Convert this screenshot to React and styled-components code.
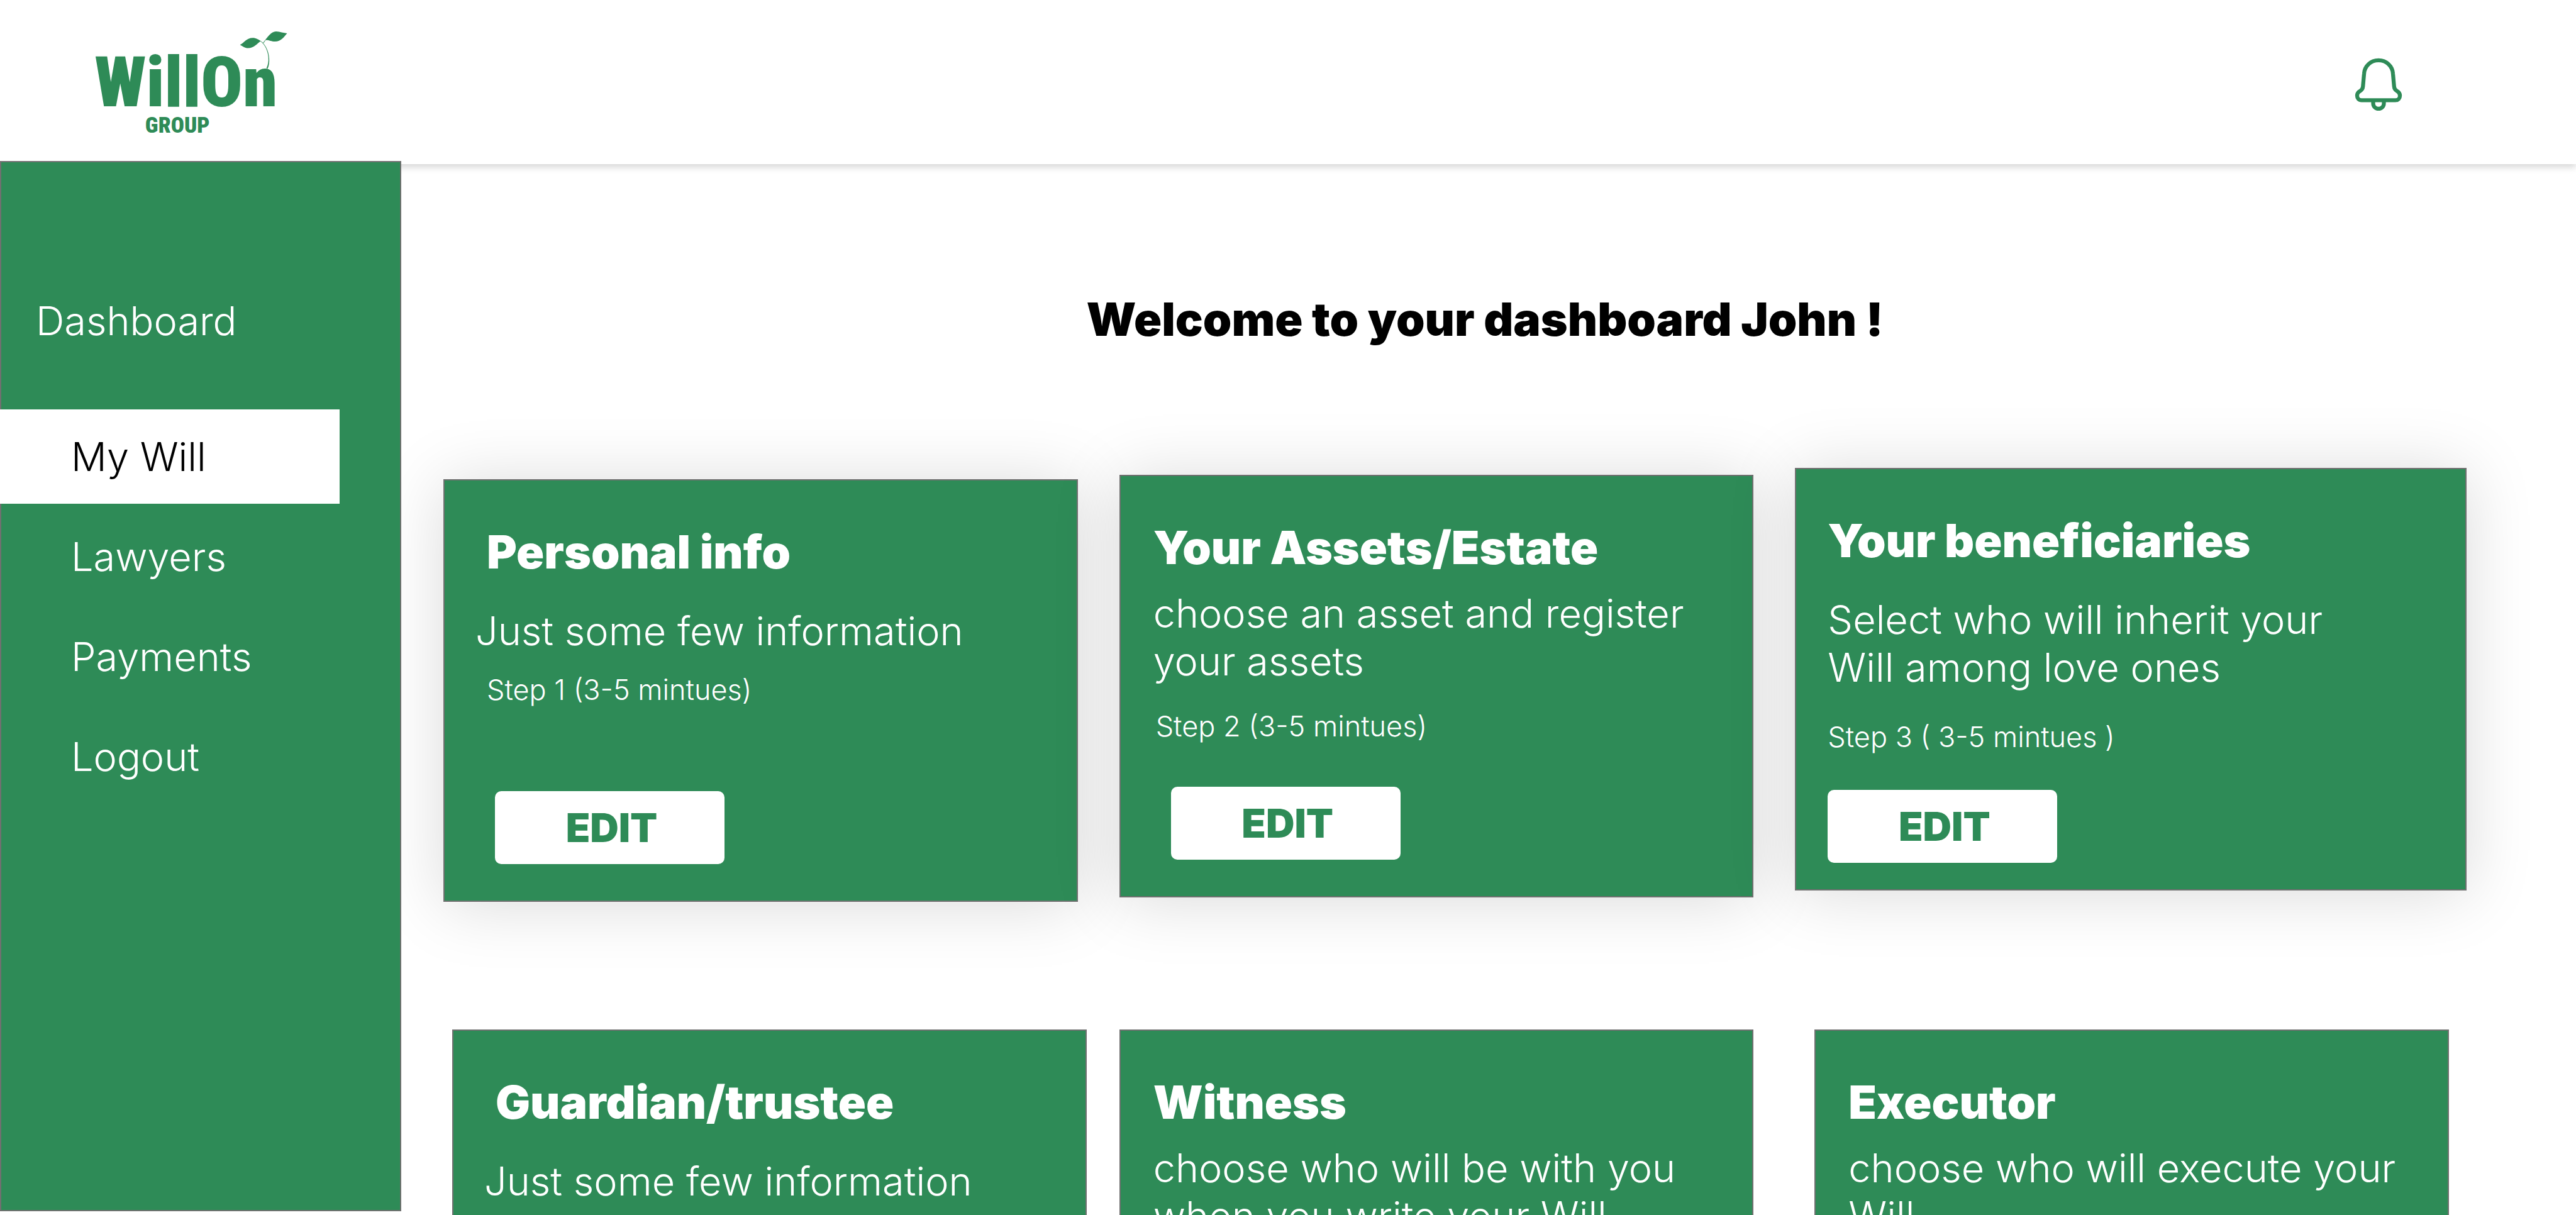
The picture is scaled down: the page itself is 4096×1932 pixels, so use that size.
import React from "react";
import styled, { createGlobalStyle } from "styled-components";

const GREEN = "#2e8b57";
const EDGE = "#707070";

const GlobalStyle = createGlobalStyle`
  *, *::before, *::after { box-sizing: border-box; }
  body {
    margin: 0;
    background: #fff;
    font-family: Inter, "Liberation Sans", sans-serif;
  }
  h1, h2, p, ul { margin: 0; padding: 0; }
`;

const Page = styled.div`
  display: flex;
  flex-direction: column;
  height: 100vh;
  overflow: hidden;
`;

const Header = styled.header`
  position: relative;
  z-index: 1;
  display: flex;
  align-items: center;
  justify-content: space-between;
  flex: none;
  height: 261px;
  padding: 0 274px 10px 107px;
  background: #fff;
  box-shadow: 0 5px 10px rgba(0, 0, 0, 0.16);
`;

const LogoLink = styled.a`
  display: block;
  line-height: 0;
`;

const LogoDrawing = styled.svg`
  width: 394px;
  height: 215px;
  fill: ${GREEN};
  font-family: "Roboto Condensed", Roboto, sans-serif;
  font-weight: 900;
`;

const BellButton = styled.button`
  display: block;
  margin-top: 16px;
  padding: 0;
  border: 0;
  background: none;
  line-height: 0;
  cursor: pointer;
`;

const BellDrawing = styled.svg`
  width: 80px;
  height: 90px;
  fill: none;
  stroke: ${GREEN};
  stroke-width: 21;
`;

const Body = styled.div`
  display: flex;
  flex: 1;
  min-height: 0;
`;

const Sidebar = styled.nav`
  position: relative;
  z-index: 2;
  flex: none;
  width: 638px;
  margin: -5px 0 6px;
  padding-top: 179px;
  background: ${GREEN};
  box-shadow: inset 0 0 0 2px ${EDGE};
`;

const NavList = styled.ul`
  display: flex;
  flex-direction: column;
  gap: 9px;
  list-style: none;
  margin-top: ${(p) => (p.$spaced ? "66px" : "0")};
`;

const NavLink = styled.a`
  display: flex;
  align-items: center;
  width: 540px;
  height: 150px;
  padding-left: ${(p) => (p.$nested ? "113px" : "57px")};
  background: ${(p) => (p.$active ? "#fff" : "transparent")};
  color: ${(p) => (p.$active ? "#000" : "#fff")};
  font-size: 63px;
  font-weight: 300;
  line-height: 76px;
  text-decoration: none;
`;

const Main = styled.main`
  flex: 1;
  min-width: 0;
  padding-top: 202px;
  overflow: hidden;
`;

const Welcome = styled.h1`
  margin-bottom: 191px;
  padding-right: 12px;
  text-align: center;
  font-size: 73px;
  font-weight: 900;
  line-height: 90px;
`;

const CardRow = styled.div`
  display: flex;
  align-items: flex-start;
  margin-bottom: 203px;
  padding-right: ${(p) => p.$end}px;
`;

const Card = styled.section`
  display: flex;
  flex-direction: column;
  align-items: flex-start;
  flex: 1 1 ${(p) => p.$basis || 1009}px;
  min-width: 0;
  height: 672px;
  margin-top: ${(p) => p.$drop || 0}px;
  margin-left: ${(p) => p.$lead}px;
  padding: 69px 48px 0 ${(p) => p.$inset}px;
  border: 2px solid ${EDGE};
  background: ${GREEN};
  color: #fff;
  box-shadow: ${(p) => (p.$raised ? "0 5px 100px rgba(0, 0, 0, 0.15)" : "none")};
`;

const CardTitle = styled.h2`
  margin-left: ${(p) => p.$indent || 0}px;
  font-size: 73px;
  font-weight: 900;
  line-height: 90px;
`;

const CardText = styled.p`
  margin-top: ${(p) => (p.$tight ? "21px" : "42px")};
  font-size: 63px;
  font-weight: 300;
  line-height: 76px;
  white-space: pre-line;
`;

const CardStep = styled.p`
  margin-top: ${(p) => p.$gap}px;
  margin-left: ${(p) => p.$indent || 0}px;
  font-size: 45px;
  font-weight: 300;
  line-height: 54px;
`;

const EditButton = styled.button`
  width: 365px;
  height: 116px;
  margin-top: auto;
  margin-bottom: ${(p) => p.$bottom}px;
  margin-left: ${(p) => p.$indent || 0}px;
  padding: 0 0 0 6px;
  border: 0;
  border-radius: 10px;
  background: #fff;
  color: ${GREEN};
  font-family: inherit;
  font-size: 63px;
  font-weight: 900;
  line-height: 76px;
  cursor: pointer;
`;

function Logo() {
  return (
    <LogoDrawing viewBox="0 0 1320 720" role="img" aria-label="WillOn Group">
      <text x="145" y="505" fontSize="371">WillOn</text>
      <text x="415" y="646" fontSize="118">GROUP</text>
      <path d="M920 178 C945 165 955 141 988 141 C1005 141 1020 150 1031 158 C1012 170 995 196 963 196 C945 196 935 186 920 178 Z" />
      <path d="M1054 153 C1070 135 1085 108 1112 107 C1135 109 1150 114 1171 117 C1155 135 1140 160 1106 161 C1085 160 1075 151 1054 153 Z" />
      <path d="M1030 157 C1062 180 1077 225 1076 265 C1075 285 1071 298 1066 306 L1061 302 C1070 285 1073 265 1071 245 C1068 210 1055 180 1028 158 Z" />
      <path d="M1054 153 L1042 168 L1045 170 L1056 155 Z" />
    </LogoDrawing>
  );
}

function Bell() {
  return (
    <BellDrawing viewBox="130 60 268 300" aria-hidden="true">
      <path d="M264 82.500 C221 82.500 189 115 187 154 L181 222 C180 234 176 240 167 245 C156 251 150 259 150 270 C150 285 159 295 174 295 H354 C369 295 378 285 378 270 C378 259 372 251 361 245 C352 240 348 234 347 222 L341 154 C339 115 307 82.500 264 82.500 Z" />
      <path d="M235.500 296 V312 A28.500 28.500 0 0 0 292.500 312 V296" />
    </BellDrawing>
  );
}

const rows = [
  {
    end: 174,
    cards: [
      { title: "Personal info", text: "Just some few information", step: "Step 1 (3-5 mintues)", lead: 67, drop: 18, inset: 49, titleIndent: 18, stepIndent: 18, stepGap: 29, buttonIndent: 31, buttonBottom: 58 },
      { title: "Your Assets/Estate", text: "choose an asset and register\nyour assets", tight: true, step: "Step 2 (3-5 mintues)", lead: 66, drop: 11, inset: 52, stepIndent: 4, stepGap: 39, buttonIndent: 28, buttonBottom: 58 },
      { title: "Your beneficiaries", text: "Select who will inherit your\nWill among love ones", step: "Step 3 ( 3-5 mintues )", lead: 66, basis: 1068, inset: 50, stepGap: 46, buttonBottom: 42 },
    ],
  },
  {
    end: 202,
    cards: [
      { title: "Guardian/trustee", text: "Just some few information", step: "Step 4 (3-5 mintues)", lead: 81, inset: 49, titleIndent: 18, stepIndent: 18, stepGap: 29, buttonIndent: 31, buttonBottom: 58 },
      { title: "Witness", text: "choose who will be with you\nwhen you write your Will", tight: true, step: "Step 5 (3-5 mintues)", lead: 52, inset: 52, stepIndent: 4, stepGap: 39, buttonIndent: 28, buttonBottom: 58 },
      { title: "Executor", text: "choose who will execute your\nWill", tight: true, step: "Step 6 (3-5 mintues)", lead: 97, inset: 52, stepIndent: 4, stepGap: 39, buttonIndent: 28, buttonBottom: 58 },
    ],
  },
];

const links = ["My Will", "Lawyers", "Payments", "Logout"];

export default function App() {
  return (
    <>
      <GlobalStyle />
      <Page>
        <Header>
          <LogoLink href="#home"><Logo /></LogoLink>
          <BellButton type="button" aria-label="Notifications"><Bell /></BellButton>
        </Header>
        <Body>
          <Sidebar aria-label="Main">
            <NavList>
              <li><NavLink href="#dashboard">Dashboard</NavLink></li>
            </NavList>
            <NavList $spaced>
              {links.map((label, i) => (
                <li key={label}>
                  <NavLink href={"#" + label.toLowerCase().replace(" ", "-")} $nested $active={i === 0}>{label}</NavLink>
                </li>
              ))}
            </NavList>
          </Sidebar>
          <Main>
            <Welcome>Welcome to your dashboard John !</Welcome>
            {rows.map((row, r) => (
              <CardRow key={row.end} $end={row.end}>
                {row.cards.map((c) => (
                  <Card key={c.title} $basis={c.basis} $drop={c.drop} $lead={c.lead} $inset={c.inset} $raised={r === 0}>
                    <CardTitle $indent={c.titleIndent}>{c.title}</CardTitle>
                    <CardText $tight={c.tight}>{c.text}</CardText>
                    <CardStep $gap={c.stepGap} $indent={c.stepIndent}>{c.step}</CardStep>
                    <EditButton type="button" $indent={c.buttonIndent} $bottom={c.buttonBottom}>EDIT</EditButton>
                  </Card>
                ))}
              </CardRow>
            ))}
          </Main>
        </Body>
      </Page>
    </>
  );
}
